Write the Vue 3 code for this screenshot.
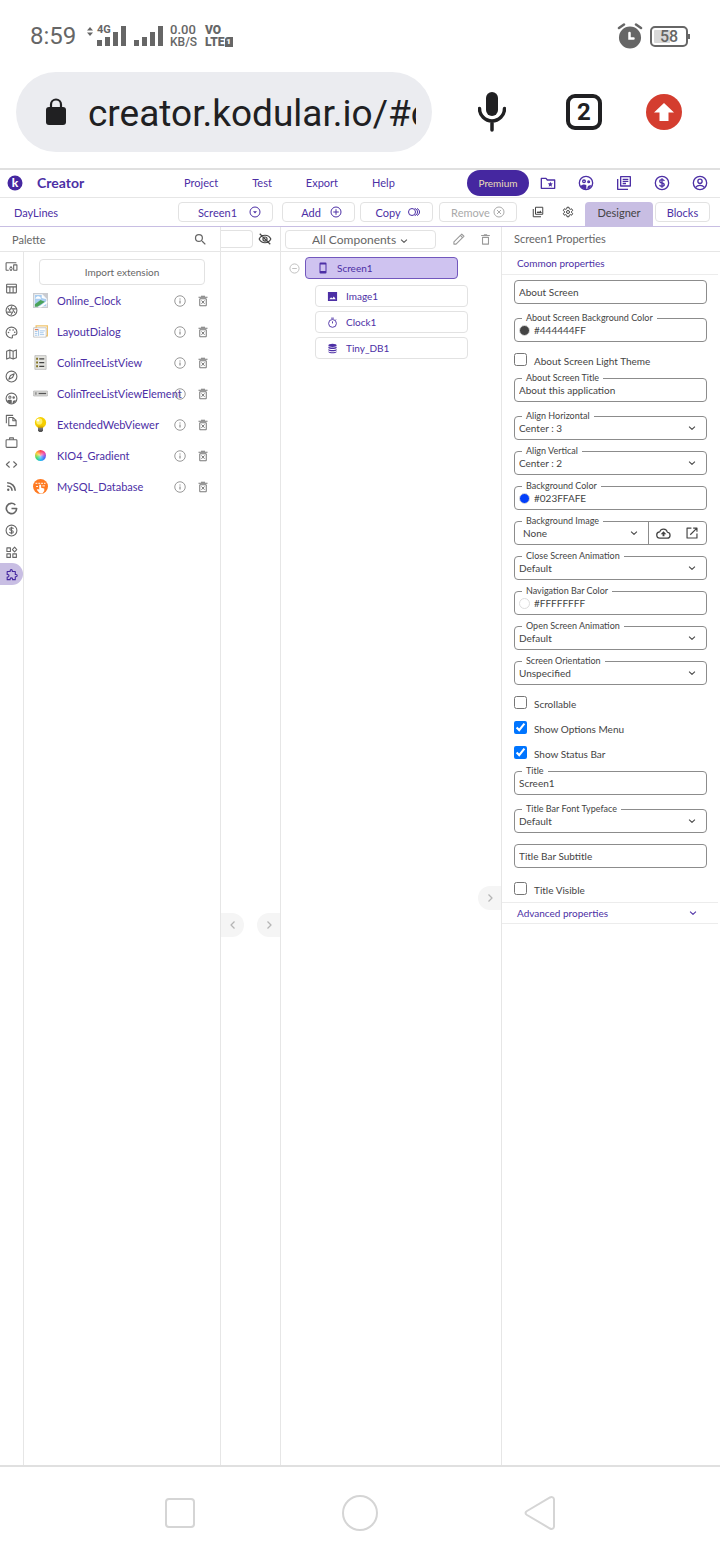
<script setup>
import { h, ref } from 'vue'

const icons = {
  search: '<path d="M15.5 14h-.79l-.28-.27A6.47 6.47 0 0 0 16 9.5 6.5 6.5 0 1 0 9.5 16c1.61 0 3.09-.59 4.23-1.57l.27.28v.79l5 4.99L20.49 19l-4.99-5zm-6 0a4.5 4.5 0 1 1 0-9 4.5 4.5 0 0 1 0 9z"/>',
  devices: '<path d="M3 6h18V4H3c-1.100 0-2 .9-2 2v12c0 1.100.9 2 2 2h4v-2H3V6zm10 6H9v1.780c-.610.550-1 1.330-1 2.220s.39 1.670 1 2.220V20h4v-1.780c.610-.550 1-1.340 1-2.220s-.39-1.670-1-2.220V12zm-2 5.500a1.500 1.500 0 1 1 0-3 1.500 1.500 0 0 1 0 3zM22 8h-6c-.5 0-1 .5-1 1v10c0 .5.5 1 1 1h6c.5 0 1-.5 1-1V9c0-.5-.5-1-1-1zm-1 10h-4v-8h4v8z"/>',
  table: '<g class="ln"><rect x="3" y="4" width="18" height="16" rx="1"/><path d="M3 9h18M9 9v11M15 9v11"/></g>',
  aperture: '<g class="ln"><circle cx="12" cy="12" r="10"/><path d="M9.500 10.500 13 4M12 9h8M14.500 10.500l4 6M14.500 14 11 20.500M12 15H4M9.500 13.500l-4-6"/></g>',
  palette: '<path class="ln" d="M12 2a10 10 0 0 0 0 20c1.500 0 2-1 1.700-2-.7-2 .3-3.500 2-3.500H18c2 0 4-1.500 4-5C22 6 17.500 2 12 2z"/><circle cx="6.500" cy="12" r="1.500"/><circle cx="9" cy="7.300" r="1.500"/><circle cx="15" cy="7.300" r="1.500"/><circle cx="18" cy="11.500" r="1.500"/>',
  map: '<path class="ln" d="M3 6 9 3.500l6 2.500 6-2.500V18l-6 2.500L9 18l-6 2.500zM9 3.500V18M15 6v14.500"/>',
  compass: '<circle class="ln" cx="12" cy="12" r="10"/><path class="ln" d="m10 10 7-3-3 7-7 3z"/>',
  social: '<circle class="ln" cx="12" cy="12" r="10"/><circle class="ln" cx="9" cy="9.500" r="2"/><circle class="ln" cx="16" cy="10" r="1.300"/><path d="M3.500 16.500c2-2.500 7-3 9-1.500v6.500c-4 0-7-1.500-9-5zM14 21c0-4 1-6 6-5.500-1.500 3.500-3 5-6 5.500z"/>',
  copy: '<path class="ln" d="M2.500 17V2.500H15M7 6.500h8l5.500 5.500v9.500H7zM14.500 7v5.500H20"/>',
  briefcase: '<g class="ln"><rect x="2" y="7" width="20" height="14" rx="1.500"/><path d="M8.500 7V3.500h7V7"/></g>',
  code: '<path class="ln" d="m8.500 6.500-6 5.500 6 5.500M15.500 6.500l6 5.500-6 5.500"/>',
  rss: '<path class="ln thick" d="M4 11a9 9 0 0 1 9 9M4 5a15 15 0 0 1 15 15"/><circle cx="6" cy="18" r="2.200"/>',
  google: '<path class="ln thick" d="M19 5.500A9.500 9.500 0 1 0 21.500 12H12"/>',
  dollar: '<circle class="ln" cx="12" cy="12" r="10"/><path class="ln" d="M15.500 9c-.5-1.500-2-2-3.500-2-4.500 0-4.500 4.300 0 5 4.500.7 4.500 5 0 5-1.700 0-3.300-.7-3.500-2.200M12 5v14"/>',
  widgets: '<path class="ln" d="M3.500 3.500h6.500v6.500H3.500zM3.500 14.500h6.500V21H3.500zM14.500 14.500H21V21h-6.500zM17.700 2l4 4.500-4 4.500-4-4.500z"/>',
  puzzle: '<path class="ln" d="M4 6.500h5.500V5a2 2 0 0 1 4 0v1.500H19V12h1.500a2 2 0 0 1 0 4H19v5.500h-5V20a2.300 2.300 0 0 0-4.500 0v1.500H4v-5h1.500a2.300 2.300 0 0 0 0-4.500H4z"/>',
  info: '<circle class="ln thin" cx="12" cy="12" r="10.500"/><path class="ln" d="M12 11v6M12 7v2"/>',
  trashx: '<path class="ln" d="M3 4.500h18M8 2.500h8M5.500 7.500h13V21.500h-13zM9 11l6 6.500M15 11l-6 6.500"/>',
  trash: '<path class="ln" d="M4 4.500h16M9 3.500h6M6.500 8v12.500h11V8z"/>',
  pencil: '<path class="ln" d="M3.500 20.500v-4L15.500 4.500l4 4-12 12zM16 4l2-2 4 4-2 2"/>',
  eyeoff: '<path class="ln" d="M2 12c4-8.500 16-8.500 20 0-4 8.500-16 8.500-20 0zM3 3l18 18"/><circle class="ln" cx="12" cy="12" r="3.500"/>',
  folder: '<path class="ln" d="M2 5h7l2 2.500h11V20H2z"/><path d="m15.500 10 1.100 2.500 2.800.3-2.100 1.900.6 2.800-2.400-1.500-2.400 1.500.6-2.800-2.100-1.900 2.800-.3z"/>',
  library: '<path class="ln" d="M7 2.500h14.500v14H7zM2.500 6v15.500H18M10 6.500h8.500M10 9.500h8.500M10 12.700h5"/>',
  account: '<g class="ln"><circle cx="12" cy="12" r="10"/><circle cx="12" cy="9.500" r="3.200"/><path d="M5.500 18.500c3-4 10-4 13 0"/></g>',
  images: '<path class="ln" d="M7 2.500h14.500v14H7zM2.500 6v15.500H18"/><path d="m9 14 3-4 2 2.500 2.500-3.500 3.500 5z"/>',
  gear: '<circle class="ln" cx="12" cy="12" r="3"/><path class="ln" d="m10 2.500-.5 3-2 1.200-2.900-1.100-2 3.500L5 11v2l-2.400 1.900 2 3.500 2.900-1.100 2 1.200.5 3h4l.5-3 2-1.200 2.900 1.100 2-3.500L19 13v-2l2.400-1.900-2-3.500-2.900 1.100-2-1.200-.5-3z"/>',
  dropcircle: '<circle class="ln" cx="12" cy="12" r="10"/><path d="M8 10.500h8L12 15z"/>',
  addcircle: '<circle class="ln" cx="12" cy="12" r="10"/><path class="ln" d="M12 6.500v11M6.500 12h11"/>',
  circles: '<circle class="ln" cx="8" cy="12" r="7"/><path class="ln" d="M13.500 5c4 1 5.500 4 5.500 7s-1.500 6-5.500 7M18 5c3.500 1.500 5 4 5 7s-1.500 5.500-5 7"/>',
  closecircle: '<circle class="ln" cx="12" cy="12" r="10"/><path class="ln" d="m8 8 8 8M16 8l-8 8"/>',
  minuscircle: '<circle class="ln" cx="12" cy="12" r="10"/><path class="ln" d="M7 12h10"/>',
  down: '<path class="ln mid" d="m5 8.500 7 7 7-7"/>',
  left: '<path class="ln mid" d="m15 5-7 7 7 7"/>',
  right: '<path class="ln mid" d="m9 5 7 7-7 7"/>',
  phone: '<path fill-rule="evenodd" d="M7 1h10a2 2 0 0 1 2 2v18a2 2 0 0 1-2 2H7a2 2 0 0 1-2-2V3a2 2 0 0 1 2-2zm0 4v13h10V5z"/>',
  image: '<path fill-rule="evenodd" d="M2 2h20v20H2zM5 18h14l-4-6-3.500 4.500-2.500-3z"/>',
  timer: '<circle class="ln" cx="12" cy="14" r="8.500"/><path class="ln" d="M9 2.500h6M12 9.500V14M18 7l1.500-1.500"/>',
  database: '<ellipse cx="12" cy="5" rx="9" ry="3.500"/><path d="M3 7.500c2 3 16 3 18 0V11c-2 3-16 3-18 0zM3 13c2 3 16 3 18 0v3c-2 3-16 3-18 0zM3 18c2 3 16 3 18 0v1.500c-2 4-16 4-18 0z"/>',
  upload: '<path class="ln" d="M6.500 19.500a5 5 0 0 1-.6-10c2-6.500 11-6 12.300.5 6 .7 5.500 9.500-.2 9.500z"/><path d="m12 8.500-4.500 4.500h3v3.500h3V13h3z"/>',
  open: '<path class="ln" d="M11 3.500H3.500v17h17V13M14 3.500h6.500V10M20.500 3.500 9 15"/>',
  broken: '<path fill="#c9cbd0" d="M0 0h24v24H0z"/><path fill="#f6fafc" d="M2 2h13l7 7v13H2z"/><path fill="#a9cdf1" d="M3 3h12l6 6v12H3z"/><path fill="#fff" d="M4 8c3-5 8-3 9 1H4zM14 2l8 8-8-2z"/><path fill="#4ba35a" d="m3 18 9-7 7 3-12 8H3z"/><path fill="#fff" d="M8 23 23 12v4L13 23z"/>',
  dialog: '<path fill="#fff" stroke="#f0c36b" stroke-width="2" d="M5 3h18v16H5z"/><path fill="#fff" stroke="#aaa" d="M1 6h20v15H1z"/><path stroke="#e87b50" stroke-width="2" d="M3 9h5"/><path stroke="#72a8dd" d="M3 12h4M3 15h4M3 18h4M11 11h8M11 14h6M11 17h7M9 8v11"/>',
  list: '<path fill="#e4e4df" stroke="#aaa" d="M3 1h18v22H3z"/><path stroke="#444" stroke-width="2" d="M10 6h8M10 12h8M10 18h8"/><path stroke="#857525" stroke-width="3" d="M5 6h3M5 12h3M5 18h3"/>',
  element: '<rect x="0" y="8" width="24" height="8" rx="2" fill="#d9d9d7" stroke="#aaa"/><path stroke="#555" stroke-width="2" d="M9 12h12"/><path stroke="#999" stroke-width="4" d="M3 12h3"/>',
  bulb: '<circle cx="12" cy="9" r="9" fill="#f5cf00"/><circle cx="10" cy="7" r="5" fill="#fff06a"/><circle cx="8" cy="5" r="2" fill="#fff"/><path fill="#e5b300" d="M7 14h10l-1 4H8z"/><path fill="#555" d="M8 17h8v5l-2 2h-4l-2-2z"/><path stroke="#aaa" d="M8 19h8"/>',
  mysql: '<circle cx="12" cy="12" r="12" fill="#ff7a22"/><path stroke="#ffe1c8" stroke-width="2" stroke-dasharray="3 1.500" d="M4 7h16"/><path fill="#fff" d="M10 9h3v5l5 1v4l-3 4h-4l-5-6 2-1 2 1z"/><path stroke="#fff" stroke-width="1.500" d="M5 12h3M15 11h4"/>'
}

const Icon = (props) => h('svg', { viewBox: '0 0 24 24', fill: 'currentColor', 'aria-hidden': 'true', innerHTML: icons[props.name] })
Icon.props = ['name']

const menu = ['Project', 'Test', 'Export', 'Help']
const accountIcons = ['folder', 'social', 'library', 'dollar', 'account']
const categories = ['devices', 'table', 'aperture', 'palette', 'map', 'compass', 'social', 'copy', 'briefcase', 'code', 'rss', 'google', 'dollar', 'widgets', 'puzzle']
const extensions = [
  ['Online_Clock', 'broken'],
  ['LayoutDialog', 'dialog'],
  ['ColinTreeListView', 'list'],
  ['ColinTreeListViewElement', 'element'],
  ['ExtendedWebViewer', 'bulb'],
  ['KIO4_Gradient', 'gradient'],
  ['MySQL_Database', 'mysql']
]
const children = [['Image1', 'image'], ['Clock1', 'timer'], ['Tiny_DB1', 'database']]

const fields = ref([
  { id: 'about', type: 'text', hint: 'About Screen', value: '', loose: true },
  { id: 'aboutBg', type: 'color', label: 'About Screen Background Color', value: '#444444FF' },
  { id: 'aboutLight', type: 'check', label: 'About Screen Light Theme', value: false },
  { id: 'aboutTitle', type: 'text', label: 'About Screen Title', value: 'About this application', loose: true },
  { id: 'alignH', type: 'select', label: 'Align Horizontal', value: 'Center : 3' },
  { id: 'alignV', type: 'select', label: 'Align Vertical', value: 'Center : 2' },
  { id: 'bg', type: 'color', label: 'Background Color', value: '#023FFAFE' },
  { id: 'bgImage', type: 'asset', label: 'Background Image', value: 'None' },
  { id: 'closeAnim', type: 'select', label: 'Close Screen Animation', value: 'Default' },
  { id: 'navColor', type: 'color', label: 'Navigation Bar Color', value: '#FFFFFFFF' },
  { id: 'openAnim', type: 'select', label: 'Open Screen Animation', value: 'Default' },
  { id: 'orientation', type: 'select', label: 'Screen Orientation', value: 'Unspecified' },
  { id: 'scrollable', type: 'check', label: 'Scrollable', value: false },
  { id: 'options', type: 'check', label: 'Show Options Menu', value: true },
  { id: 'status', type: 'check', label: 'Show Status Bar', value: true },
  { id: 'title', type: 'text', label: 'Title', value: 'Screen1', loose: true },
  { id: 'typeface', type: 'select', label: 'Title Bar Font Typeface', value: 'Default' },
  { id: 'subtitle', type: 'text', hint: 'Title Bar Subtitle', value: '', loose: true },
  { id: 'visible', type: 'check', label: 'Title Visible', value: false }
])
const swatches = { '#444444FF': '#444444', '#023FFAFE': '#023ffa', '#FFFFFFFF': '#ffffff' }
const url = ref('creator.kodular.io/#c')
</script>

<template>
  <div class="screen">
    <header class="status">
      <span class="time">8:59</span>
      <span class="signal">
        <svg width="77" height="22" viewBox="0 0 77 22" fill="#666">
          <path d="M0 5.500 3 2l3 3.500zM0 7.500 3 11l3-3.500z" />
          <path d="M10 15h5v6h-5zM18 12h5v9h-5zM26 7h5v14h-5zM34 1h5v20h-5zM47 15h5v6h-5zM55 12h5v9h-5zM63 7h5v14h-5zM71 1h5v20h-5z" />
        </svg>
        <b>4G</b>
      </span>
      <span class="rate"><span>0.00</span><span>KB/S</span></span>
      <span class="volte"><span>VO</span><span>LTE<i>1</i></span></span>
      <svg class="alarm" width="26" height="26" viewBox="0 0 26 26" fill="none" stroke="#666" stroke-width="2.500" stroke-linecap="round">
        <circle cx="13" cy="14.500" r="9.800" fill="#666" /><path d="m2 5 5-3.500M24 5l-5-3.500" /><path d="M12.500 10v5.500h4" stroke="#fff" />
      </svg>
      <span class="battery"><span>58</span></span>
    </header>

    <div class="browser">
      <div class="address">
        <svg width="20" height="28" viewBox="0 0 20 28"><rect y="9" width="20" height="18" rx="3" fill="#202022" /><path d="M5 10V6.500a5 5 0 0 1 10 0V10" fill="none" stroke="#202022" stroke-width="2.200" /></svg>
        <input v-model="url" aria-label="Address">
      </div>
      <button class="plain" aria-label="Voice search">
        <svg width="28" height="40" viewBox="0 0 28 40"><rect x="8" width="12" height="24" rx="6" fill="#202022" /><path d="M1.500 16.500a12.500 12.500 0 0 0 25 0M14 30v8" fill="none" stroke="#202022" stroke-width="3.500" stroke-linecap="round" /></svg>
      </button>
      <button class="tabs" aria-label="Open tabs">2</button>
      <button class="plain" aria-label="Update">
        <svg width="36" height="36" viewBox="0 0 36 36"><circle cx="18" cy="18" r="18" fill="#d43d2f" /><path d="M18 9 28 18.500h-5.500V27h-9v-8.500H8z" fill="#fff" /></svg>
      </button>
    </div>

    <main class="creator">
      <nav class="topbar">
        <svg class="logo" width="16" height="16" viewBox="0 0 16 16"><circle cx="8" cy="8" r="7.500" fill="#4527a0" /><text x="8" y="12" text-anchor="middle">k</text></svg>
        <strong>Creator</strong>
        <div class="menu"><button v-for="m in menu" :key="m" class="plain">{{ m }}</button></div>
        <button class="premium">Premium</button>
        <div class="account"><button v-for="i in accountIcons" :key="i" class="plain" :aria-label="i"><Icon :name="i" class="i16" /></button></div>
      </nav>

      <div class="toolbar">
        <span class="project">DayLines</span>
        <button class="outline b-screen">Screen1<Icon name="dropcircle" class="i12" /></button>
        <button class="outline b-add">Add<Icon name="addcircle" class="i12" /></button>
        <button class="outline b-copy">Copy<Icon name="circles" class="i12" /></button>
        <button class="outline b-remove" disabled>Remove<Icon name="closecircle" class="i12" /></button>
        <button class="plain dark b-assets" aria-label="Assets"><Icon name="images" class="i12" /></button>
        <button class="plain dark b-gear" aria-label="Settings"><Icon name="gear" class="i12" /></button>
        <button class="designer">Designer</button>
        <button class="outline b-blocks">Blocks</button>
      </div>

      <div class="workspace">
        <section class="panel palette">
          <div class="head"><h2>Palette</h2><button class="plain" aria-label="Search"><Icon name="search" class="i15" /></button></div>
          <div class="palette-body">
            <div class="rail">
              <button v-for="c in categories" :key="c" class="plain" :class="{ active: c === 'puzzle' }" :aria-label="c"><Icon :name="c" class="i13" /></button>
            </div>
            <div class="extensions">
              <button class="outline import">Import extension</button>
              <ul>
                <li v-for="[name, icon] in extensions" :key="name">
                  <span v-if="icon === 'gradient'" class="wheel"></span>
                  <Icon v-else :name="icon" class="i15" />
                  <span class="name">{{ name }}</span>
                  <button class="plain" :aria-label="'About ' + name"><Icon name="info" class="i12" /></button>
                  <button class="plain" :aria-label="'Delete ' + name"><Icon name="trashx" class="i12" /></button>
                </li>
              </ul>
            </div>
          </div>
        </section>

        <section class="panel viewer">
          <div class="head"><span class="stub"></span><button class="plain dark" aria-label="Hidden components"><Icon name="eyeoff" class="i14" /></button></div>
          <button class="handle to-left" aria-label="Collapse palette"><Icon name="left" class="i12" /></button>
          <button class="handle to-right" aria-label="Collapse components"><Icon name="right" class="i12" /></button>
        </section>

        <section class="panel tree">
          <div class="head">
            <div class="filter"><select aria-label="Component filter"><option>All Components</option></select><Icon name="down" class="i10" /></div>
            <button class="plain" aria-label="Rename"><Icon name="pencil" class="i13" /></button>
            <button class="plain" aria-label="Delete"><Icon name="trash" class="i13" /></button>
          </div>
          <div class="nodes">
            <button class="plain" aria-label="Collapse Screen1"><Icon name="minuscircle" class="i11" /></button>
            <button class="node root"><Icon name="phone" class="i12" />Screen1</button>
            <div class="kids">
              <button v-for="[name, icon] in children" :key="name" class="node"><Icon :name="icon" class="i11" />{{ name }}</button>
            </div>
          </div>
          <button class="handle upper" aria-label="Collapse properties"><Icon name="right" class="i12" /></button>
        </section>

        <section class="panel properties">
          <div class="head"><h2>Screen1 Properties</h2></div>
          <button class="group">Common properties</button>
          <form @submit.prevent>
            <template v-for="f in fields" :key="f.id">
              <div v-if="f.type === 'check'" class="check">
                <input :id="f.id" v-model="f.value" type="checkbox"><label :for="f.id">{{ f.label }}</label>
              </div>
              <div v-else class="field" :class="{ loose: f.loose }">
                <label v-if="f.label" :for="f.id">{{ f.label }}</label>
                <span v-if="f.type === 'color'" class="swatch" :style="{ background: swatches[f.value] }"></span>
                <span v-if="f.type === 'select' || f.type === 'asset'" class="pick" :class="f.type"><select :id="f.id" v-model="f.value"><option>{{ f.value }}</option></select><Icon name="down" class="i10" /></span>
                <input v-else :id="f.id" v-model="f.value" type="text" :placeholder="f.hint" :aria-label="f.hint">
                <span v-if="f.type === 'asset'" class="asset-actions">
                  <button class="plain dark" type="button" aria-label="Upload"><Icon name="upload" class="i15" /></button>
                  <button class="plain dark" type="button" aria-label="Open"><Icon name="open" class="i14" /></button>
                </span>
              </div>
            </template>
          </form>
          <button class="group advanced">Advanced properties<Icon name="down" class="i10" /></button>
        </section>
      </div>
    </main>

    <footer class="sysnav">
      <button class="plain" aria-label="Recent apps"><svg width="36" height="36" viewBox="0 0 36 36"><rect x="4" y="4" width="28" height="28" rx="3" /></svg></button>
      <button class="plain" aria-label="Home"><svg width="36" height="36" viewBox="0 0 36 36"><circle cx="18" cy="18" r="17" /></svg></button>
      <button class="plain" aria-label="Back"><svg width="36" height="36" viewBox="0 0 36 36"><path d="M5 16 28 2.500c2-1 4 0 4 2v27c0 2-2 3-4 2L5 20q-3-2 0-4z" /></svg></button>
    </footer>
  </div>
</template>

<style>
html, body { background: #fff; }
</style>

<style scoped>
.screen { min-height: 100vh; display: flex; flex-direction: column; color: #4c2fa5; font-family: Lato, "Liberation Sans", sans-serif; background: #fff; }
.screen, .screen * { box-sizing: border-box; }
svg { display: block; flex: none; }
button, input, select { font: inherit; color: inherit; margin: 0; padding: 0; border: 0; background: none; min-width: 0; }
.plain { display: flex; align-items: center; justify-content: center; }
.dark { color: #444; }
.screen :deep(.ln) { fill: none; stroke: currentColor; stroke-width: 2; stroke-linejoin: round; }
.screen :deep(.mid) { stroke-width: 2.5; }
.screen :deep(.thick) { stroke-width: 3; }
.screen :deep(.thin) { stroke-width: 1.5; }
.i10 { width: 10px; height: 10px; }
.i11 { width: 11px; height: 11px; }
.i12 { width: 12px; height: 12px; }
.i13 { width: 13px; height: 13px; }
.i14 { width: 14px; height: 14px; }
.i15 { width: 15px; height: 15px; }
.i16 { width: 16px; height: 16px; }

.status { display: flex; align-items: center; height: 72px; padding: 0 30px; color: #666; font-family: Roboto, sans-serif; }
.time { font-size: 24px; width: 57px; }
.signal { position: relative; width: 83px; }
.signal b { position: absolute; left: 10px; top: 0; font-size: 11px; line-height: 10px; }
.rate, .volte { display: flex; flex-direction: column; line-height: 12px; font-size: 13px; font-weight: 500; }
.rate { width: 35px; }
.rate span + span { font-size: 12px; }
.volte { font-size: 12px; font-weight: 900; }
.volte span { display: flex; align-items: center; }
.volte i { width: 8px; height: 10px; background: #666; color: #fff; font-size: 8px; line-height: 10px; text-align: center; font-style: normal; border-radius: 3px 0 0 0; }
.alarm { margin-left: auto; }
.battery { display: flex; align-items: center; justify-content: center; position: relative; width: 38px; height: 21px; margin: 0 2px 0 7px; border: 2px solid #666; border-radius: 5px; font-size: 16px; font-weight: 500; background: linear-gradient(90deg, #d8d8d8 55%, #fff 55%) content-box; padding: 2px; }
.battery::after { content: ""; position: absolute; right: -4px; top: 6px; width: 2px; height: 5px; background: #666; }

.browser { display: flex; align-items: center; height: 98px; padding: 0 38px 16px 16px; border-bottom: 2px solid #e0e0e0; color: #202022; font-family: Roboto, sans-serif; }
.address { display: flex; align-items: center; flex: 1; min-width: 0; height: 80px; margin-right: 46px; padding: 0 16px 0 30px; gap: 22px; border-radius: 40px; background: #ebecf0; }
.address input { flex: 1; width: 0; height: 56px; padding-top: 3px; font-size: 37px; }
.tabs { width: 36px; height: 36px; margin: 0 44px 0 60px; border: 4px solid #202022; border-radius: 9px; font-size: 24px; line-height: 28px; font-weight: 700; }

.creator { flex: 1; display: flex; flex-direction: column; font-size: 12px; }
.topbar { display: flex; align-items: center; height: 28px; padding: 0 12px 2px 7px; border-bottom: 1px solid #e6e6e6; }
.logo text { fill: #fff; font-size: 12px; font-weight: 900; }
.topbar strong { margin-left: 14px; width: 147px; font-size: 14px; }
.menu { display: flex; gap: 34px; font-size: 11px; }
.premium { margin-left: auto; width: 62px; height: 26px; border-radius: 13px; background: #4527a0; color: #eadfb8; font-size: 10px; }
.account { display: flex; gap: 22px; margin-left: 11px; }

.toolbar { display: flex; align-items: center; height: 29px; padding: 0 10px 0 14px; border-bottom: 1px solid #c8bee3; font-size: 11px; }
.project { flex: 1; }
.outline { display: flex; align-items: center; justify-content: center; height: 20px; border: 1px solid #e2e2e2; border-radius: 4px; }
.b-screen { width: 95px; gap: 12px; padding-left: 8px; margin-right: 9px; }
.b-add { width: 73px; gap: 9px; padding-left: 6px; margin-right: 5px; }
.b-copy { width: 73px; gap: 7px; padding-left: 2px; margin-right: 6px; }
.b-remove { width: 78px; gap: 3px; color: #aaa; margin-right: 15px; }
.b-assets { margin-right: 18px; }
.b-gear { margin-right: 11px; }
.designer { width: 68px; height: 24px; align-self: flex-end; padding-bottom: 4px; background: #c8bee3; border-radius: 4px 4px 0 0; color: #444; margin-right: 2px; }
.b-blocks { width: 55px; }

.workspace { flex: 1; display: grid; grid-template-columns: minmax(0, 221fr) minmax(0, 60fr) minmax(0, 221fr) minmax(0, 218fr); }
.panel { position: relative; border-right: 1px solid #e6e6e6; }
.properties { border-right: 0; }
.head { display: flex; align-items: center; height: 25px; border-bottom: 1px solid #e6e6e6; color: #666; }
h2 { margin: 0; font-size: 11px; font-weight: 400; }
.palette { display: flex; flex-direction: column; }
.palette .head { justify-content: space-between; padding: 0 12px; }
.palette-body { flex: 1; display: flex; }
.rail { width: 24px; padding-top: 3px; border-right: 1px solid #e6e6e6; }
.rail button { width: 23px; height: 22px; color: #666; }
.rail .active { background: #c8bee3; border-radius: 0 11px 11px 0; color: #4527a0; }
.extensions { flex: 1; min-width: 0; padding: 7px 9px 0 9px; }
.import { width: calc(100% - 12px); margin: 0 6px; height: 26px; color: #666; font-size: 10px; }
ul { list-style: none; margin: 0; padding: 0; font-size: 11px; }
li { display: flex; align-items: center; height: 31px; }
.name { flex: 1; width: 0; white-space: nowrap; margin-left: 9px; }
li button { color: #777; }
li button + button { margin: 0 2px 0 11px; }
.wheel { width: 11px; height: 11px; margin: 0 2px; border-radius: 50%; background: radial-gradient(circle, #fff9 0, transparent 60%), conic-gradient(#f44, #e4a, #46f, #2be, #4d6, #fc3, #f44); }

.stub { flex: 1; height: 18px; border: 1px solid #e2e2e2; border-left: 0; border-radius: 0 4px 4px 0; }
.viewer .head { gap: 5px; padding-right: 8px; }
.handle { position: absolute; display: flex; align-items: center; justify-content: center; width: 23px; height: 24px; background: #f5f5f5; color: #b5b5b5; top: 55.4%; }
.to-left { left: 0; border-radius: 0 12px 12px 0; }
.to-right { right: 0; border-radius: 12px 0 0 12px; }
.upper { right: 0; top: 53.2%; border-radius: 12px 0 0 12px; }

.tree .head { padding: 0 9px 0 4px; gap: 14px; color: #999; }
.filter { position: relative; flex: 1; height: 19px; margin-right: 2px; }
select { appearance: none; width: 100%; height: 100%; }
.filter select { padding-left: 26px; border: 1px solid #e2e2e2; border-radius: 4px; color: #666; }
.filter svg { position: absolute; right: 27px; top: 6px; color: #555; pointer-events: none; }
.nodes { display: grid; grid-template-columns: 16px 1fr; align-items: center; padding: 5px 43px 0 8px; font-size: 10px; }
.nodes > .plain { justify-content: flex-start; color: #bbb; }
.node { display: flex; align-items: center; gap: 8px; width: 100%; height: 22px; padding-left: 11px; border: 1px solid #e2e2e2; border-radius: 4px; }
.root { background: #cfc3f0; border-color: #7257bd; }
.kids { grid-column: 2; display: flex; flex-direction: column; gap: 4px; margin: 6px -10px 0 10px; }

.properties { font-size: 10px; color: #444; }
.properties .head { padding: 0 12px 2px; }
.group { display: flex; align-items: center; justify-content: space-between; width: calc(100% - 2px); height: 23px; padding: 0 20px 0 15px; border-bottom: 1px solid #ececec; color: #4c2fa5; }
.advanced { height: 22px; border-top: 1px solid #ececec; }
form { padding: 5px 13px 0 12px; }
.field { position: relative; display: flex; align-items: center; height: 24px; margin-bottom: 11px; border: 1px solid #8c8c8c; border-radius: 4px; }
.loose { margin-bottom: 14px; }
.field label { position: absolute; left: 7px; top: -6px; padding: 0 4px; background: #fff; font-size: 9px; line-height: 10px; }
.field input { flex: 1; width: 0; height: 20px; padding-left: 4px; }
input::placeholder { color: #444; opacity: 1; }
.swatch { width: 11px; height: 11px; margin-left: 4px; border: 1px solid #ddd; border-radius: 50%; }
.pick { position: relative; flex: 1; height: 100%; }
.pick select { padding-left: 4px; }
.pick svg { position: absolute; right: 9px; top: 6px; pointer-events: none; }
.asset { border-right: 1px solid #8c8c8c; }
.asset select { padding-left: 8px; }
.asset-actions { display: flex; gap: 14px; padding: 0 7px; }
.check { display: flex; align-items: flex-start; height: 25px; }
.check input { width: 13px; height: 13px; }
.check label { margin-left: 7px; line-height: 17px; }
.check:last-child { height: 20px; }

.sysnav { display: grid; grid-template-columns: repeat(3, 1fr); height: 95px; padding: 0 12.5% 2px; border-top: 2px solid #e0e0e0; }
.sysnav svg { fill: none; stroke: #d5d5d5; stroke-width: 2; }
</style>
